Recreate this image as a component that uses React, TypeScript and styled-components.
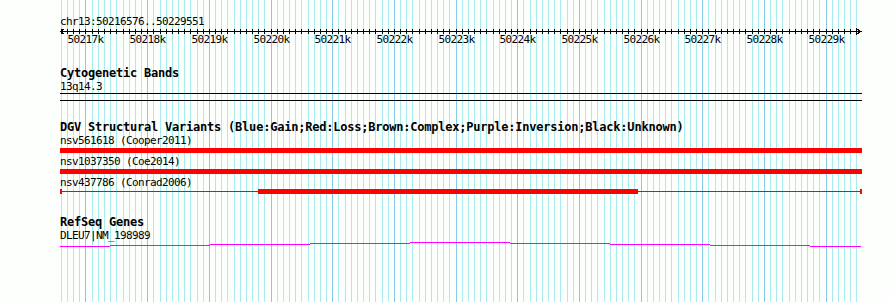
import React from "react";
import styled, { createGlobalStyle } from "styled-components";

const START = 50216576;
const END = 50229551;
const ORIGIN = 59.85;
const SCALE = 0.06167;
const X0 = 60;
const X1 = 862;
const px = (bp: number) => ORIGIN + (bp - START) * SCALE;

const GlobalStyle = createGlobalStyle`
  html, body {
    margin: 0;
    padding: 0;
    background: #fdfffd;
  }
  body {
    width: 890px;
    height: 302px;
    overflow: hidden;
  }
`;

const Panel = styled.div`
  position: relative;
  width: 890px;
  height: 302px;
  box-sizing: border-box;
  padding-left: ${X0}px;
  padding-top: 15px;
  overflow: hidden;
  font-family: "DejaVu Sans Mono", "Liberation Mono", monospace;
  color: #000;
`;

const GridLayer = styled.svg`
  position: absolute;
  left: 0;
  top: 0;
  z-index: 0;
  shape-rendering: crispEdges;
`;

const Content = styled.div`
  position: relative;
  z-index: 1;
  display: flex;
  flex-direction: column;
`;

const Track = styled.section<{ $gap: number }>`
  display: flex;
  flex-direction: column;
  margin-top: ${(p) => p.$gap}px;
`;

const Title = styled.div`
  font-weight: bold;
  font-size: 12px;
  letter-spacing: -0.22px;
  line-height: 13px;
  height: 13px;
  white-space: nowrap;
`;

const Label = styled.div`
  font-size: 11px;
  letter-spacing: -0.62px;
  line-height: 13px;
  height: 13px;
  white-space: nowrap;
`;

const Glyph = styled.svg`
  display: block;
  overflow: visible;
  shape-rendering: crispEdges;
`;

const RulerText = styled.text`
  font-family: "DejaVu Sans Mono", "Liberation Mono", monospace;
  font-size: 11px;
  letter-spacing: -0.62px;
  fill: #000;
`;

const GW = X1 - X0;
const rx = (bp: number) => Math.floor(px(bp)) - X0;

const gridPositions: { x: number; major: boolean }[] = [];
for (let bp = 50216600; bp <= 50229500; bp += 100) {
  gridPositions.push({ x: Math.floor(px(bp)), major: bp % 1000 === 0 });
}

function Grid() {
  return (
    <GridLayer width={890} height={302}>
      {gridPositions.map((g, i) => (
        <rect
          key={i}
          x={g.x}
          y={0}
          width={1}
          height={302}
          fill={g.major ? "#88c8ea" : "#a8ecef"}
        />
      ))}
    </GridLayer>
  );
}

function Ruler() {
  const ticks = [];
  const labels = [];
  for (let bp = 50216600; bp <= 50229500; bp += 100) {
    const x = rx(bp) + 0.5;
    ticks.push(<line key={bp} x1={x} x2={x} y1={1} y2={6} stroke="#000" />);
    if (bp % 1000 === 0) {
      labels.push(
        <RulerText key={"l" + bp} x={x} y={15.3} textAnchor="middle">
          {`${bp / 1000}k`}
        </RulerText>
      );
    }
  }
  return (
    <Glyph width={GW} height={18}>
      <line x1={0} x2={GW} y1={3.5} y2={3.5} stroke="#000" />
      <path d={`M4.5 0.5 L0.5 3.5 L4.5 6.5`} fill="none" stroke="#000" />
      <path d={`M${GW - 5.5} 0.5 L${GW - 1.5} 3.5 L${GW - 5.5} 6.5`} fill="none" stroke="#000" />
      {ticks}
      {labels}
    </Glyph>
  );
}

function Band() {
  return (
    <Glyph width={GW} height={8}>
      <rect x={0} y={0} width={GW} height={1} fill="#000" />
      <rect x={0} y={7} width={GW} height={1} fill="#000" />
    </Glyph>
  );
}

function SolidVariant() {
  return (
    <Glyph width={GW} height={8}>
      <rect x={0} y={1} width={GW} height={5} fill="#ff0000" />
    </Glyph>
  );
}

function GappedVariant({ from, to }: { from: number; to: number }) {
  return (
    <Glyph width={GW} height={8}>
      <rect x={0} y={2} width={GW} height={1} fill="#ff0000" />
      <rect x={0} y={0} width={2} height={5} fill="#ff0000" />
      <rect x={GW - 2} y={0} width={2} height={5} fill="#ff0000" />
      <rect x={from - X0} y={0} width={to - from} height={5} fill="#ff0000" />
    </Glyph>
  );
}

const geneSteps = [
  { from: 60, to: 110, y: 4 },
  { from: 110, to: 210, y: 3 },
  { from: 210, to: 310, y: 2 },
  { from: 310, to: 410, y: 1 },
  { from: 410, to: 510, y: 0 },
  { from: 510, to: 610, y: 1 },
  { from: 610, to: 710, y: 2 },
  { from: 710, to: 810, y: 3 },
  { from: 810, to: 861, y: 4 },
];

function Gene() {
  return (
    <Glyph width={GW} height={6}>
      {geneSteps.map((s, i) => (
        <rect key={i} x={s.from - X0} y={s.y} width={s.to - s.from} height={1} fill="#ff00ff" />
      ))}
    </Glyph>
  );
}

const variants = [
  { id: "nsv561618 (Cooper2011)", kind: "solid" },
  { id: "nsv1037350 (Coe2014)", kind: "solid" },
  { id: "nsv437786 (Conrad2006)", kind: "gapped" },
];

export default function App() {
  return (
    <>
      <GlobalStyle />
      <Panel>
        <Grid />
        <Content>
          <Track $gap={0}>
            <Label>chr13:50216576..50229551</Label>
            <Ruler />
          </Track>
          <Track $gap={21}>
            <Title>Cytogenetic Bands</Title>
            <Label>13q14.3</Label>
            <Band />
          </Track>
          <Track $gap={20}>
            <Title>
              DGV Structural Variants (Blue:Gain;Red:Loss;Brown:Complex;Purple:Inversion;Black:Unknown)
            </Title>
            {variants.map((v) => (
              <React.Fragment key={v.id}>
                <Label>{v.id}</Label>
                {v.kind === "solid" ? <SolidVariant /> : <GappedVariant from={258} to={638} />}
              </React.Fragment>
            ))}
          </Track>
          <Track $gap={19}>
            <Title>RefSeq Genes</Title>
            <Label>DLEU7|NM_198989</Label>
            <Gene />
          </Track>
        </Content>
      </Panel>
    </>
  );
}
